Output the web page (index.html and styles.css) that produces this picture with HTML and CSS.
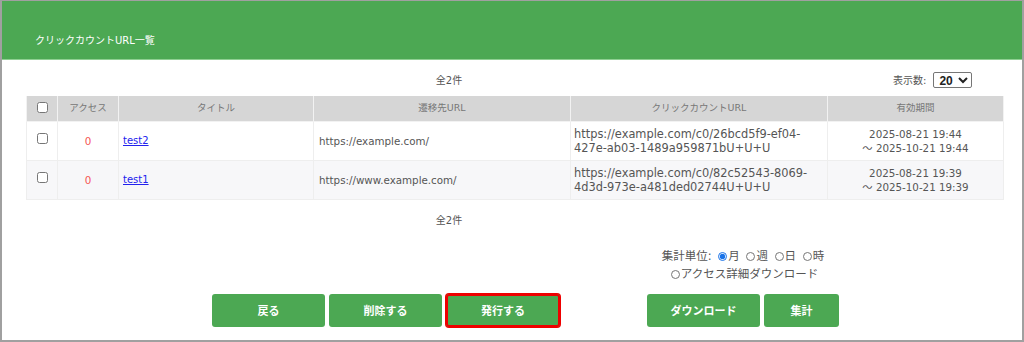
FILE: index.html
```html
<!DOCTYPE html>
<html lang="ja">
<head>
    <meta charset="UTF-8">
    <meta name="viewport" content="width=device-width, initial-scale=1.0">
    <title>クリックカウントURL一覧</title>
    <link rel="stylesheet" href="styles.css">
</head>
<body>

<div class="frame">
    <div class="header">
        <h1>クリックカウントURL一覧</h1>
    </div>

    <div class="content">
        <div class="toolbar">
            <div class="count">全2件</div>
            <div class="per-page">
                <label for="perPage">表示数:</label>
                <select id="perPage">
                    <option>20</option>
                    <option>50</option>
                    <option>100</option>
                </select>
            </div>
        </div>

        <table class="url-table">
            <colgroup>
                <col style="width: 31px">
                <col style="width: 61px">
                <col style="width: 195px">
                <col style="width: 257px">
                <col style="width: 257px">
                <col style="width: 176px">
            </colgroup>
            <thead>
                <tr>
                    <th><input type="checkbox"></th>
                    <th>アクセス</th>
                    <th>タイトル</th>
                    <th>遷移先URL</th>
                    <th>クリックカウントURL</th>
                    <th>有効期間</th>
                </tr>
            </thead>
            <tbody>
                <tr>
                    <td class="check"><input type="checkbox"></td>
                    <td class="access">0</td>
                    <td class="title"><a href="#">test2</a></td>
                    <td class="dest">https://example.com/</td>
                    <td class="click-url">https://example.com/c0/26bcd5f9-ef04-427e-ab03-1489a959871bU+U+U</td>
                    <td class="period">2025-08-21 19:44<br>～ 2025-10-21 19:44</td>
                </tr>
                <tr>
                    <td class="check"><input type="checkbox"></td>
                    <td class="access">0</td>
                    <td class="title"><a href="#">test1</a></td>
                    <td class="dest">https://www.example.com/</td>
                    <td class="click-url">https://example.com/c0/82c52543-8069-4d3d-973e-a481ded02744U+U+U</td>
                    <td class="period">2025-08-21 19:39<br>～ 2025-10-21 19:39</td>
                </tr>
            </tbody>
        </table>

        <div class="toolbar bottom">
            <div class="count">全2件</div>
        </div>
    </div>

    <div class="actions">
        <div class="btn-group">
            <button type="button" class="btn">戻る</button>
            <button type="button" class="btn">削除する</button>
            <button type="button" class="btn btn-marked">発行する</button> <!-- highlighted in red -->
        </div>

        <div class="report">
            <div class="options">
                <div class="option-line">
                    集計単位:
                    <label><input type="radio" name="unit" checked>月</label>
                    <label><input type="radio" name="unit">週</label>
                    <label><input type="radio" name="unit">日</label>
                    <label><input type="radio" name="unit">時</label>
                </div>
                <div class="option-line">
                    <label><input type="radio" name="unit">アクセス詳細ダウンロード</label>
                </div>
            </div>
            <div class="btn-group">
                <button type="button" class="btn">ダウンロード</button>
                <button type="button" class="btn btn-small">集計</button>
            </div>
        </div>
    </div>
</div>

</body>
</html>
```

FILE: styles.css
```css
body {
    margin: 0;
    padding: 0;
    font-family: "DejaVu Sans", "Noto Sans CJK JP", sans-serif;
    color: #555;
    background: #fff;
}

.frame {
    width: 1024px;
    height: 342px;
    box-sizing: border-box;
    border: 2px solid #a0a0a0;
    border-top-width: 1px;
    overflow: hidden;
}

/* green title bar */
.header {
    height: 59px;
    background-color: #4ca853;
    border-bottom: 1px solid #8fcf92;
    display: flex;
    align-items: flex-end;
    padding: 0 0 12px 33px;
    box-sizing: border-box;
}

.header h1 {
    margin: 0;
    font-size: 10px;
    font-weight: normal;
    color: #fff;
    line-height: 12px;
}

.content {
    padding: 0 18px 0 24px;
}

.toolbar {
    height: 36px;
    display: flex;
    align-items: center;
    font-size: 10px;
}

.count {
    width: 846px;
    text-align: center;
    padding-top: 2px;
}

.per-page {
    display: flex;
    align-items: center;
    gap: 7px;
    margin-left: 21px;
    padding-top: 3px;
}

.per-page select {
    font-family: "Liberation Sans", sans-serif;
    font-size: 12px;
    font-weight: bold;
    color: #222;
    height: 16px;
    width: 39px;
    padding: 0 0 0 1px;
    border: 1px solid #767676;
    border-radius: 2px;
    background: #fff;
}

/* list table */
.url-table {
    width: 977px;
    border-collapse: collapse;
    table-layout: fixed;
}

.url-table th,
.url-table td {
    box-sizing: border-box;
    line-height: 14px;
}

.url-table th {
    height: 25px;
    padding: 0;
    background-color: #d6d6d6;
    border: 1px solid #f2f2f2;
    border-top: none;
    font-size: 9.5px;
    font-weight: normal;
    color: #777;
    text-align: center;
}

.url-table td {
    height: 39px;
    padding: 0 4px;
    border: 1px solid #eeeeee;
    font-size: 10.3px;
    color: #555;
}

.url-table tbody tr:nth-child(even) td {
    background-color: #f7f7f9;
}

.url-table input[type="checkbox"] {
    display: block;
    width: 11px;
    height: 11px;
    margin: 0 auto;
}

.url-table th:first-child {
    padding-bottom: 2px;
}

.check {
    padding-bottom: 4px !important;
}

.access {
    text-align: center;
    color: #f55656 !important;
}

.title a {
    color: #2222ee;
    font-size: 10px;
}

.dest {
    padding-left: 5px !important;
}

.click-url {
    font-size: 11.4px !important;
    padding: 0 2px 0 3px !important;
}

.period {
    text-align: center;
}

.bottom {
    height: 37px;
}

/* bottom controls */
.actions {
    display: flex;
    align-items: flex-end;
    margin-top: 10px;
    padding-left: 210px;
    gap: 87px;
}

.btn-group {
    display: flex;
    gap: 4px;
}

.btn {
    width: 113px;
    height: 33px;
    background-color: #4ca853;
    color: #fff;
    border: none;
    border-radius: 3px;
    font-family: "DejaVu Sans", "Noto Sans CJK JP", sans-serif;
    font-size: 11px;
    font-weight: bold;
    cursor: pointer;
}

.btn:hover {
    background-color: #3f9446;
}

.btn-marked {
    width: 114px;
    outline: 2px solid #ee0000;
    outline-offset: -2px;
    box-shadow: 0 0 0 1px #ee0000;
}

.btn-small {
    width: 75px;
}

.report {
    display: flex;
    flex-direction: column;
    align-items: center;
    gap: 11px;
}

.options {
    font-size: 11.5px;
    color: #555;
    text-align: center;
    line-height: 18px;
}

.option-line label {
    margin-left: 3px;
}

.option-line input[type="radio"] {
    width: 9px;
    height: 9px;
    margin: 0 1px 0 0;
    vertical-align: -1px;
    accent-color: #1a73e8;
}
```
